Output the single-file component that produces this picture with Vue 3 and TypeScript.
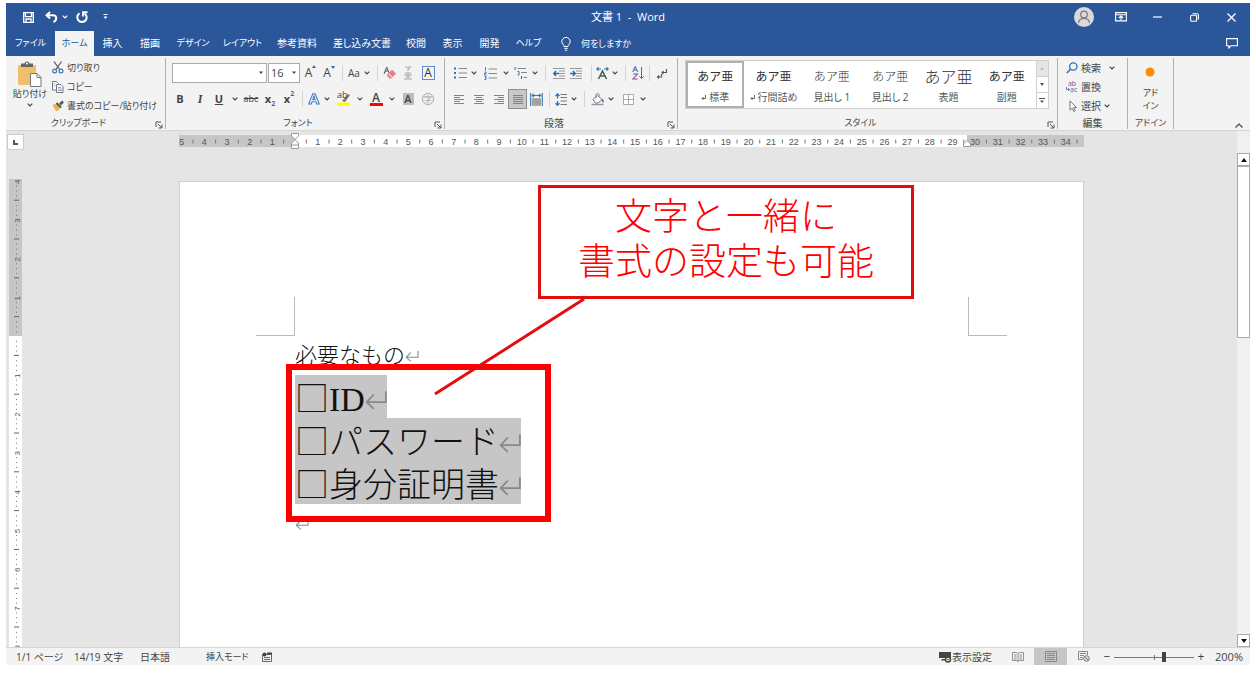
<script setup lang="ts">
import { ref } from 'vue'

interface Tab { label: string; kana: boolean }
const tabs: Tab[] = [
  { label: 'ファイル', kana: true },
  { label: 'ホーム', kana: true },
  { label: '挿入', kana: false },
  { label: '描画', kana: false },
  { label: 'デザイン', kana: true },
  { label: 'レイアウト', kana: true },
  { label: '参考資料', kana: false },
  { label: '差し込み文書', kana: false },
  { label: '校閲', kana: false },
  { label: '表示', kana: false },
  { label: '開発', kana: false },
  { label: 'ヘルプ', kana: true },
]
const activeTab = ref('ホーム')

interface StyleItem { name: string; kind: string; mark: boolean }
const styleItems: StyleItem[] = [
  { name: '標準', kind: 'mincho', mark: true },
  { name: '行間詰め', kind: 'mincho', mark: true },
  { name: '見出し 1', kind: 'gothic', mark: false },
  { name: '見出し 2', kind: 'gothic', mark: false },
  { name: '表題', kind: 'title', mark: false },
  { name: '副題', kind: 'mincho', mark: false },
]
const activeStyle = ref('標準')

const fontName = ref('')
const fontSize = ref('16')
const zoom = ref(63)

/* Horizontal ruler: one unit per character, origin at the left margin. */
const hUnit = 22.67
const hOrigin = 116
const hNumbers = Array.from({ length: 40 }, (_, i) => i - 5).filter((n) => n !== 0)
const hTicks = Array.from({ length: 40 }, (_, i) => i - 4.5)

/* Vertical ruler: one unit per line group, with eighths as dots. */
const vUnit = 38.8
const vOrigin = 157
const vNumbers = [-4, -3, -2, -1, 1, 2, 3, 4, 5, 6, 7, 8]
const vTicks = Array.from({ length: 13 }, (_, i) => i - 3.5)
const vDots = Array.from({ length: 100 }, (_, i) => (i - 31) / 8).filter((n) => n % 0.5 !== 0)

const selectedLines: string[] = ['ID', 'パスワード', '身分証明書']
</script>

<template>
  <div class="window">
    <svg class="defs" aria-hidden="true">
      <symbol id="i-chev" viewBox="0 0 6 4"><path d="M.7.7 3 3 5.3.7" fill="none" stroke="currentColor" stroke-width="1.2" /></symbol>
      <symbol id="i-tri" viewBox="0 0 6 4"><path d="M1 .5h4L3 3z" fill="currentColor" /></symbol>
      <symbol id="i-launch" viewBox="0 0 8 8"><path d="M1 6V1h5M3 3l4 4M7 3.5V7H3.5" fill="none" stroke="#555" /></symbol>
      <symbol id="i-return" viewBox="0 0 20 18"><path d="M19 1v10H2M8 4l-6.500 7L8 17" fill="none" stroke="currentColor" stroke-width="1.600" /></symbol>
    </svg>

    <header class="titlebar">
      <div class="quick">
        <button aria-label="上書き保存"><svg width="11" height="11" viewBox="0 0 11 11"><path d="M.7.7h9.600v9.600H.7zM2.500.7v4h6v-4M3 10.300V7h5v3.300" fill="none" stroke="#fff" stroke-width="1.300" /></svg></button>
        <button aria-label="元に戻す"><svg width="13" height="12" viewBox="0 0 13 12"><path d="M5 1 1.500 4.200 5 7.500M2 4.200h6c4 0 4.500 5 .5 6.800" fill="none" stroke="#fff" stroke-width="2" /></svg></button>
        <button aria-label="元に戻す履歴"><svg width="6" height="4"><use href="#i-chev" /></svg></button>
        <button aria-label="繰り返し"><svg width="12" height="12" viewBox="0 0 12 12"><path d="M3.500 2.200C-.5 5.200 1.500 11 6 11s6.400-5.500 2.500-8.500M7 5.500V1.200h4.500" fill="none" stroke="#fff" stroke-width="1.900" /></svg></button>
        <button aria-label="クイック アクセスの設定"><svg width="5" height="6" viewBox="0 0 5 6"><path d="M.5.5h4" stroke="#fff" /><path d="M.5 2.500h4l-2 2.500z" fill="#fff" /></svg></button>
      </div>
      <h1 class="doc-title">文書 1&nbsp; -&nbsp; Word</h1>
      <div class="controls">
        <button aria-label="アカウント"><svg width="20" height="20" viewBox="0 0 20 20"><circle cx="10" cy="10" r="10" fill="#dcdad8" /><circle cx="10" cy="7.500" r="3.300" fill="none" stroke="#777" stroke-width="1.200" /><path d="M4.500 16c.4-6 10.600-6 11 0" fill="none" stroke="#777" stroke-width="1.200" /></svg></button>
        <button aria-label="リボンの表示オプション"><svg width="12" height="10" viewBox="0 0 12 10"><path d="M.6.6h10.800v8.300H.6zM.6 2.700h10.800M6 8V4.200M3.800 6 6 4l2.200 2" fill="none" stroke="#fff" stroke-width="1.100" /></svg></button>
        <button aria-label="最小化"><svg width="9" height="2"><path d="M0 1h9" stroke="#fff" stroke-width="1.200" /></svg></button>
        <button aria-label="元のサイズ"><svg width="9" height="9" viewBox="0 0 9 9"><rect x=".6" y="2.300" width="6" height="6" rx="1" fill="none" stroke="#fff" stroke-width="1.100" /><path d="M2.500.7H7q1.400 0 1.400 1.400V6.500" fill="none" stroke="#fff" stroke-width="1.100" /></svg></button>
        <button aria-label="閉じる"><svg width="9" height="9"><path d="m.5.5 8 8m0-8-8 8" stroke="#fff" stroke-width="1.200" /></svg></button>
      </div>
    </header>

    <nav class="tabbar">
      <div class="tabs" role="tablist">
        <button v-for="t in tabs" :key="t.label" role="tab" :aria-selected="t.label === activeTab" :class="{ active: t.label === activeTab, kana: t.kana }" @click="activeTab = t.label">{{ t.label }}</button>
      </div>
      <button class="tell kana">
        <svg width="10" height="14" viewBox="0 0 10 14"><path d="M3 9.500C3 7.500.8 7 .8 4.600a4.200 4.200 0 0 1 8.400 0C9.200 7 7 7.500 7 9.500zM3.200 11.300h3.600M3.800 13.200h2.400" fill="none" stroke="#fff" /></svg>
        何をしますか
      </button>
      <button class="comment" aria-label="コメント"><svg width="12" height="11" viewBox="0 0 12 11"><path d="M.6.6h10.800v7.200H5L2.800 10V7.800H.6z" fill="none" stroke="#fff" stroke-width="1.100" /></svg></button>
    </nav>

    <section class="ribbon">
      <div class="group clipboard">
        <div class="body kana">
          <button class="paste">
            <svg width="24" height="26" viewBox="0 0 24 26"><rect y="4" width="18" height="20" rx="1" fill="#eebf6c" /><path d="M3 2.500h3.500a2.600 2.600 0 0 1 5 0H15V6H3z" fill="#666" /><circle cx="9" cy="2.500" r="1" fill="#fff" /><path d="M12.500 12.500h6.500l4 4v9H12.500z" fill="#fff" stroke="#777" /><path d="M19 12.500v4h4" fill="none" stroke="#777" /></svg>
            <span>貼り付け</span>
            <svg width="6" height="4"><use href="#i-chev" /></svg>
          </button>
          <div class="stack">
            <button><svg width="12" height="13" viewBox="0 0 12 13"><path d="M2 .5 8 9M9.500.5 3.500 9" stroke="#555" stroke-width="1.200" /><circle cx="2.600" cy="10" r="1.900" fill="none" stroke="#3c78b5" stroke-width="1.200" /><circle cx="9" cy="10" r="1.900" fill="none" stroke="#3c78b5" stroke-width="1.200" /></svg><span>切り取り</span></button>
            <button><svg width="12" height="12" viewBox="0 0 12 12"><path d="M.5.5h4l2 2V9h-6z" fill="#fff" stroke="#777" /><path d="M4.500 3.500h4.500l2 2v6H4.500z" fill="#fff" stroke="#777" /><path d="M6 6.500h3M6 8h4M6 9.500h4M1.500 3h2M1.500 5h2" stroke="#6d9bd0" stroke-width=".8" /></svg><span>コピー</span></button>
            <button><svg width="12" height="12" viewBox="0 0 12 12"><path d="m.5 5 4-1.500 4 4L6 10.500l-2 .8z" fill="#f0b24a" /><path d="m4.500 3 4.500 4.500" stroke="#555" stroke-width="2" /><path d="m8 4.500 3-3" stroke="#555" stroke-width="2.500" /></svg><span>書式のコピー/貼り付け</span></button>
          </div>
        </div>
        <footer class="kana"><span>クリップボード</span><button aria-label="クリップボードの詳細"><svg width="8" height="8"><use href="#i-launch" /></svg></button></footer>
      </div>

      <div class="group font">
        <div class="body rows">
          <div class="row font-a">
            <label class="combo"><input v-model="fontName" aria-label="フォント名"><svg width="6" height="4"><use href="#i-tri" /></svg></label>
            <label class="combo size"><input v-model="fontSize" aria-label="フォント サイズ"><svg width="6" height="4"><use href="#i-tri" /></svg></label>
            <button class="grow" aria-label="拡大"><span>A</span><svg width="4" height="4" viewBox="0 0 4 4"><path d="M0 3h4L2 0z" fill="#2b6cb8" /></svg></button>
            <button class="grow" aria-label="縮小"><span>A</span><svg width="4" height="4" viewBox="0 0 4 4"><path d="M0 1h4L2 4z" fill="#2b6cb8" /></svg></button>
            <i class="sep" />
            <button>Aa</button>
            <button aria-label="文字種の変換"><svg width="6" height="4"><use href="#i-chev" /></svg></button>
            <i class="sep" />
            <button aria-label="書式のクリア"><svg width="14" height="14" viewBox="0 0 14 14"><path d="m1 8 2.700-7L6 7M2 5h3" fill="none" stroke="#555" /><path d="m3.500 9 5.500-5.500 4 4L8 12.500H6.500z" fill="#e8808c" /><path d="m5.500 7.500 3.500 3.800" stroke="#fff" /></svg></button>
            <button aria-label="ルビ"><svg width="8" height="14" viewBox="0 0 8 14"><path d="M1 1h6L4 4M4 2v3M1 7h6M0 9h8M1.500 11h5M0 13h8M4 7v6" fill="none" stroke="#aaa" /></svg></button>
            <button class="boxed-a">A</button>
          </div>
          <div class="row font-b">
            <button class="b">B</button>
            <button class="i">I</button>
            <button class="b u">U</button>
            <button aria-label="下線の種類"><svg width="6" height="4"><use href="#i-chev" /></svg></button>
            <button class="strike">abc</button>
            <button class="b">x<sub>2</sub></button>
            <button class="b">x<sup>2</sup></button>
            <i class="sep" />
            <button aria-label="文字の効果"><svg width="12" height="12" viewBox="0 0 12 12"><path d="M.8 11 4.800.8h2.400l4 10.200H8.800L8 8.800H4L3.200 11zM4.700 6.800h2.600L6 3z" fill="#fff" stroke="#3e80cc" stroke-width="1.100" /></svg></button>
            <button aria-label="文字の効果の種類"><svg width="6" height="4"><use href="#i-chev" /></svg></button>
            <button class="marker"><span>ab</span><svg width="14" height="14" viewBox="0 0 14 14"><path d="m5 9 6-7 2 1-5 7z" fill="#777" /><path d="M0 10.500h13V14H0z" fill="#ff0" /></svg></button>
            <button aria-label="蛍光ペンの色"><svg width="6" height="4"><use href="#i-chev" /></svg></button>
            <button class="color-a">A</button>
            <button aria-label="フォントの色"><svg width="6" height="4"><use href="#i-chev" /></svg></button>
            <button class="shade-a">A</button>
            <button class="ring">字</button>
          </div>
        </div>
        <footer class="kana"><span>フォント</span><button aria-label="フォントの詳細"><svg width="8" height="8"><use href="#i-launch" /></svg></button></footer>
      </div>

      <div class="group para">
        <div class="body rows">
          <div class="row para-a">
            <button aria-label="箇条書き"><svg width="13" height="12" viewBox="0 0 13 12"><path d="M4.500 1.500H13M4.500 6H13M4.500 10.500H13" stroke="#888" /><path d="M0 1.500h2M0 6h2M0 10.500h2" stroke="#2f71b8" stroke-width="2" /></svg></button>
            <button aria-label="箇条書きの種類"><svg width="6" height="4"><use href="#i-chev" /></svg></button>
            <button aria-label="段落番号"><svg width="13" height="13" viewBox="0 0 13 13"><path d="M4.500 2H13M4.500 6.500H13M4.500 11H13" stroke="#888" /><path d="M1.500 0v3.500M.5 5h1.500v1.500H.5V8H2.500M.5 9.500H2v3H.5M1 11h1" fill="none" stroke="#2f71b8" stroke-width=".9" /></svg></button>
            <button aria-label="段落番号の種類"><svg width="6" height="4"><use href="#i-chev" /></svg></button>
            <button aria-label="アウトライン"><svg width="13" height="12" viewBox="0 0 13 12"><path d="M3.500 1.500H12M7 5.500h6M9.500 10.500H13" stroke="#888" /><path d="M1 0v3M3.500 4.500h1.500V8H3.500M7.500 9v3" fill="none" stroke="#2f71b8" /></svg></button>
            <button aria-label="アウトラインの種類"><svg width="6" height="4"><use href="#i-chev" /></svg></button>
            <i class="sep" />
            <button aria-label="インデントを減らす"><svg width="12" height="11" viewBox="0 0 12 11"><path d="M0 .5h12M6 3h6M6 5.500h6M6 8h6M0 10.500h12" stroke="#999" /><path d="M6 5.500H1M3 3 .8 5.500 3 8" fill="none" stroke="#2468b2" stroke-width="1.500" /></svg></button>
            <button aria-label="インデントを増やす"><svg width="12" height="11" viewBox="0 0 12 11"><path d="M0 .5h12M6 3h6M6 5.500h6M6 8h6M0 10.500h12" stroke="#999" /><path d="M0 5.500h5M3 3l2.200 2.500L3 8" fill="none" stroke="#2468b2" stroke-width="1.500" /></svg></button>
            <i class="sep" />
            <button aria-label="拡張書式"><svg width="13" height="13" viewBox="0 0 13 13"><path d="M2.500 12 6.500 4l4 8M4 9h5" fill="none" stroke="#4e5a4e" stroke-width="1.500" /><path d="M1 2h4M8 2h4M2.500.3.8 2l1.700 1.700M10.500.3 12.200 2l-1.700 1.700" fill="none" stroke="#2f71b8" stroke-width="1.200" /></svg></button>
            <button aria-label="拡張書式の種類"><svg width="6" height="4"><use href="#i-chev" /></svg></button>
            <i class="sep" />
            <button aria-label="並べ替え"><svg width="12" height="14" viewBox="0 0 12 14"><path d="M.7 6 3.200.5 5.700 6M1.500 4h3.400" fill="none" stroke="#3b7cc4" stroke-width="1.100" /><path d="M1 8h4.500L1 13h4.700" fill="none" stroke="#8a4ba0" stroke-width="1.100" /><path d="M9.500 1v11.500M7.300 10.300l2.200 2.200 2.200-2.200" fill="none" stroke="#666" /></svg></button>
            <i class="sep" />
            <button aria-label="編集記号の表示"><svg width="12" height="11" viewBox="0 0 12 11"><path d="M10.500 1v3.500H6M7.500 3 6 4.500 7.500 6M5.500 6v3H1.500M3 7.500 1.500 9 3 10.500" fill="none" stroke="#555" stroke-width="1.100" /></svg></button>
          </div>
          <div class="row para-b">
            <button aria-label="左揃え"><svg width="10" height="10" viewBox="0 0 10 10"><path d="M0 1.500h10M0 3.500h6M0 5.500h10M0 7.500h6M0 9.500h10" stroke="#777" stroke-width=".9" /></svg></button>
            <button aria-label="中央揃え"><svg width="10" height="10" viewBox="0 0 10 10"><path d="M0 1.500h10M2 3.500h6M0 5.500h10M2 7.500h6M0 9.500h10" stroke="#777" stroke-width=".9" /></svg></button>
            <button aria-label="右揃え"><svg width="10" height="10" viewBox="0 0 10 10"><path d="M0 1.500h10M4 3.500h6M0 5.500h10M4 7.500h6M0 9.500h10" stroke="#777" stroke-width=".9" /></svg></button>
            <button class="pressed" aria-label="両端揃え"><svg width="10" height="10" viewBox="0 0 10 10"><path d="M0 1.500h10M0 3.500h10M0 5.500h10M0 7.500h10M0 9.500h10" stroke="#777" stroke-width=".9" /></svg></button>
            <button aria-label="均等割り付け"><svg width="13" height="13" viewBox="0 0 13 13"><path d="M.7 0v13M12.300 0v13M2.500 2.500h8M4 .8 2.300 2.500 4 4.200M9 .8l1.700 1.700L9 4.200" fill="none" stroke="#2f71b8" stroke-width="1.100" /><path d="M2 5.500h9v7H2z" fill="#bbb" /><path d="M2 6h9M2 8h9M2 10h9M2 12h9" stroke="#888" /></svg></button>
            <i class="sep" />
            <button aria-label="行間"><svg width="12" height="13" viewBox="0 0 12 13"><path d="M5.500 1.500H12M5.500 4.500H12M5.500 8H12M5.500 11.500H12" stroke="#777" /><path d="M2.500 1v4.500M2.500 8v4M.5 3l2-2 2 2M.5 10.300l2 2 2-2" fill="none" stroke="#2f71b8" stroke-width="1.300" /></svg></button>
            <button aria-label="行間の種類"><svg width="6" height="4"><use href="#i-chev" /></svg></button>
            <i class="sep" />
            <button aria-label="塗りつぶし"><svg width="14" height="13" viewBox="0 0 14 13"><path d="m2 6.500 4.500-4 4.500 4L7 10H4.500zM5 5V2c0-2 3-2 3 0v1.500" fill="#fff" stroke="#777" /><path d="M11 5.500c2 1 2.200 3 1.300 4.500-1.500-.5-1.500-2.500-1.300-4.500z" fill="#3b7cc4" /><path d="M.5 11.500h12" stroke="#999" stroke-width="1.500" /></svg></button>
            <button aria-label="塗りつぶしの色"><svg width="6" height="4"><use href="#i-chev" /></svg></button>
            <button aria-label="罫線"><svg width="11" height="11" viewBox="0 0 11 11"><path d="M.5.5h10v10H.5zM5.500.5v10M.5 5.500h10" fill="#fff" stroke="#aaa" /></svg></button>
            <button aria-label="罫線の種類"><svg width="6" height="4"><use href="#i-chev" /></svg></button>
          </div>
        </div>
        <footer><span>段落</span><button aria-label="段落の詳細"><svg width="8" height="8"><use href="#i-launch" /></svg></button></footer>
      </div>

      <div class="group styles">
        <div class="body">
          <div class="gallery">
            <button v-for="s in styleItems" :key="s.name" class="style" :class="{ chosen: s.name === activeStyle }" @click="activeStyle = s.name">
              <span class="sample" :class="s.kind">あア亜</span>
              <span class="name"><svg v-if="s.mark" width="5" height="5" viewBox="0 0 5 5"><path d="M4.500 0v3.500H1M2.500 2 1 3.500 2.500 5" fill="none" stroke="#666" /></svg>{{ s.name }}</span>
            </button>
            <div class="gallery-nav">
              <button class="dim" aria-label="前の行"><svg width="4" height="3" viewBox="0 0 4 3"><path d="M0 3h4L2 0z" fill="#bbb" /></svg></button>
              <button aria-label="次の行"><svg width="4" height="3" viewBox="0 0 4 3"><path d="M0 0h4L2 3z" fill="#555" /></svg></button>
              <button aria-label="その他"><svg width="6" height="6" viewBox="0 0 6 6"><path d="M0 .5h6" stroke="#555" /><path d="M1 2.500h4L3 5z" fill="#555" /></svg></button>
            </div>
          </div>
        </div>
        <footer class="kana"><span>スタイル</span><button aria-label="スタイルの詳細"><svg width="8" height="8"><use href="#i-launch" /></svg></button></footer>
      </div>

      <div class="group edit">
        <div class="body stack">
          <button><svg width="12" height="12" viewBox="0 0 12 12"><circle cx="7.300" cy="4.500" r="3.700" fill="none" stroke="#2f71b8" stroke-width="1.300" /><path d="M4.600 7.200.8 11" stroke="#2f71b8" stroke-width="1.600" /></svg><span>検索</span><svg class="gap" width="6" height="4"><use href="#i-chev" /></svg></button>
          <button><span class="swap"><b>ab</b><em><svg width="4" height="5" viewBox="0 0 4 5"><path d="M.5 0v2.500h3M2 1l1.500 1.500L2 4" fill="none" stroke="#2f71b8" stroke-width=".8" /></svg>ac</em></span><span>置換</span></button>
          <button><svg width="12" height="12" viewBox="0 0 12 12"><path d="M4 .8v9.400l2.200-2 1.600 3.300 1.300-.7-1.500-3.200h2.900z" fill="#fff" stroke="#777" /></svg><span>選択</span><svg width="6" height="4"><use href="#i-chev" /></svg></button>
        </div>
        <footer class="plain"><span>編集</span></footer>
      </div>

      <div class="group addin">
        <div class="body kana">
          <button><svg width="10" height="10"><circle cx="5" cy="5" r="4.500" fill="#ff8c00" /></svg><span>アド<br>イン</span></button>
        </div>
        <footer class="plain kana"><span>アドイン</span></footer>
      </div>
      <button class="collapse" aria-label="リボンを折りたたむ"><svg width="8" height="5" viewBox="0 0 8 5"><path d="M.5 4.500 4 1l3.500 3.500" fill="none" stroke="#444" stroke-width="1.200" /></svg></button>
    </section>

    <main class="editor">
      <aside class="left-rail">
        <button class="corner" aria-label="タブ セレクター"><svg width="5" height="5"><path d="M1 0v4h4" fill="none" stroke="#555" stroke-width="2" /></svg></button>
        <svg class="vruler" width="13" height="640" viewBox="0 0 13 640" aria-hidden="true">
          <rect width="13" height="640" fill="#fff" />
          <rect width="13" :height="vOrigin" fill="#c6c6c6" />
          <path v-for="t in vTicks" :key="'t' + t" :d="`M5 ${vOrigin + t * vUnit}h5`" stroke="#666" />
          <rect v-for="d in vDots" :key="'d' + d" x="7" :y="vOrigin + d * vUnit" width="1" height="1" fill="#777" />
          <text v-for="n in vNumbers" :key="'n' + n" :transform="`translate(10.500 ${vOrigin + n * vUnit + 1}) rotate(-90)`" text-anchor="middle">{{ Math.abs(n) }}</text>
        </svg>
      </aside>

      <div class="canvas">
        <svg class="hruler" viewBox="0 0 905 18" aria-hidden="true">
          <rect y="4" width="905" height="12" fill="#fff" />
          <rect y="4" width="116" height="12" fill="#c6c6c6" />
          <rect x="788" y="4" width="117" height="12" fill="#c6c6c6" />
          <path v-for="t in hTicks" :key="'t' + t" :d="`M${hOrigin + t * hUnit} 8.500v4`" stroke="#777" />
          <text v-for="n in hNumbers" :key="'n' + n" :x="hOrigin + n * hUnit" y="14" text-anchor="middle">{{ Math.abs(n) }}</text>
          <path d="M112.500 2.500h7v2.500l-3.500 3.500-3.500-3.500zM116 8.500l3.500 3.500v5.500h-7V12zM112.500 14h7M788 9.500l3.500 3.500v2.500h-7V13z" fill="#fff" stroke="#999" />
        </svg>

        <article class="page">
          <div class="crop"><i class="crop-l" /><i class="crop-r" /></div>
          <div class="text">
            <p class="intro">必要なもの<svg width="14" height="12"><use href="#i-return" /></svg></p>
            <p v-for="line in selectedLines" :key="line" class="picked"><span><span class="box">□</span>{{ line }}<svg width="22" height="20"><use href="#i-return" /></svg></span></p>
            <p class="intro"><svg width="14" height="12"><use href="#i-return" /></svg></p>
          </div>
          <div class="frame" />
          <svg class="pointer" width="154" height="100" viewBox="0 0 154 100"><path d="M151 3 2 98" stroke="#e30d0d" stroke-width="3" /></svg>
          <div class="callout">文字と一緒に<br>書式の設定も可能</div>
        </article>
      </div>

      <div class="scrollbar">
        <button aria-label="上へ"><svg width="6" height="4" viewBox="0 0 6 4"><path d="M0 4h6L3 0z" fill="#111" /></svg></button>
        <div class="thumb" />
        <button class="down" aria-label="下へ"><svg width="6" height="4" viewBox="0 0 6 4"><path d="M0 0h6L3 4z" fill="#111" /></svg></button>
      </div>
    </main>

    <footer class="status">
      <span class="s-page">1/1 ページ</span>
      <span class="s-count">14/19 文字</span>
      <span class="s-lang">日本語</span>
      <span class="s-mode kana">挿入モード</span>
      <svg width="10" height="10" viewBox="0 0 10 10"><path d="M.5 2.500h9v7h-9zM2 5.500h6M2 7.500h6" fill="none" stroke="#666" /><circle cx="2.500" cy="2.500" r="2" fill="#444" /><path d="M5 1.500h5" stroke="#444" stroke-width="2" /></svg>
      <button class="display"><svg width="13" height="12" viewBox="0 0 13 12"><path d="M0 1h12v6H0zM3 8h3v1.500H2z" fill="#444" /><circle cx="9" cy="8.500" r="2.500" fill="#f3f3f3" stroke="#444" stroke-width="1.500" /><circle cx="9" cy="8.500" r=".8" fill="#444" /></svg>表示設定</button>
      <button class="view" aria-label="閲覧モード"><svg width="12" height="10" viewBox="0 0 12 10"><path d="M.5.5h4L6 1.500 7.500.5h4v8h-4L6 9.500l-1.500-1h-4zM6 1.500v8M2 3h2.500M2 5h2.500M2 7h2.500M7.500 3H10M7.500 5H10M7.500 7H10" fill="none" stroke="#888" stroke-width=".9" /></svg></button>
      <button class="view on" aria-label="印刷レイアウト"><svg width="12" height="11" viewBox="0 0 12 11"><path d="M.5.5h11v10H.5zM2 2.500h8M2 4.500h8M2 6.500h8M2 8.500h8" fill="none" stroke="#888" /></svg></button>
      <button class="view" aria-label="Web レイアウト"><svg width="12" height="11" viewBox="0 0 12 11"><path d="M5 8.500H.5v-8h9V4M2 2.500h6M2 4.500h4M2 6.500h3" fill="none" stroke="#888" /><circle cx="8.500" cy="7.500" r="2.800" fill="#ddd" stroke="#777" /><path d="m6.500 5.500 4 4" stroke="#777" /></svg></button>
      <div class="zoom">
        <button aria-label="縮小">−</button>
        <input v-model.number="zoom" type="range" min="0" max="100" aria-label="ズーム">
        <button aria-label="拡大">+</button>
        <span>200%</span>
      </div>
    </footer>
  </div>
</template>

<style>
body { margin: 0; background: #fff; }
</style>

<style scoped>
* { box-sizing: border-box; }
.window {
  display: flex;
  flex-direction: column;
  height: 100vh;
  padding: 3px 6px 8px;
  color: #444;
  font: 10px/14px "Open Sans", "Noto Sans CJK JP", sans-serif;
  font-feature-settings: "palt";
}
.defs { position: absolute; width: 0; height: 0; }
button {
  display: flex;
  align-items: center;
  justify-content: center;
  margin: 0;
  padding: 0;
  border: 0;
  background: none;
  color: inherit;
  font: inherit;
  font-feature-settings: inherit;
  white-space: nowrap;
}
svg { flex: none; display: block; }
.kana { font-size: 9px; }

.titlebar { display: grid; grid-template-columns: 1fr auto 1fr; flex: none; align-items: center; height: 28px; background: #2b579a; color: #fff; }
.quick, .controls { display: grid; align-items: center; height: 28px; }
.quick { grid-template-columns: 24px 22px 6px 28px 18px; justify-content: start; padding-left: 10px; }
.controls { grid-template-columns: repeat(5, 37px); justify-content: end; }
.doc-title { margin: 0; font-size: 11px; font-weight: 400; }

.tabbar { display: flex; flex: none; height: 25px; background: #2b579a; color: #fff; }
.tabs { display: grid; grid-template-columns: 49px 39px 37px 38px 48px 51px 58px 72px 36px 37px 37px 41px; }
.tabs button { padding-bottom: 1px; }
.tabs .active { background: #f3f3f3; color: #2b579a; }
.tell { gap: 10px; padding-left: 12px; }
.comment { width: 37px; margin-left: auto; }

.ribbon { display: flex; flex: none; height: 75px; background: #f3f3f3; border-bottom: 1px solid #d5d5d5; }
.group { display: flex; flex-direction: column; flex: none; margin: 2px 0 1px; border-right: 1px solid #b0b0b0; }
.group .body { flex: 1; }
.group > footer { display: flex; height: 13px; align-items: center; justify-content: center; position: relative; padding-right: 14px; }
.group > footer.plain { padding-right: 0; }
.group > footer button { position: absolute; right: 2px; bottom: 0; }
.clipboard { width: 160px; }
.font { width: 279px; }
.para { width: 233px; }
.styles { width: 380px; }
.edit { width: 70px; }
.addin { width: 46px; }
.collapse { margin: auto 7px 2px auto; }
.clipboard .body { display: flex; }
.paste { flex-direction: column; width: 46px; padding: 3px 0 0 2px; justify-content: flex-start; }
.paste > svg:last-child { margin-top: 2px; }
.stack { display: flex; flex-direction: column; }
.stack button { height: 19px; gap: 3px; justify-content: flex-start; }
.stack .gap { margin-left: 5px; }
.rows { display: flex; flex-direction: column; gap: 6px; padding-top: 5px; }
.row { display: grid; height: 20px; }
.row > * { height: 20px; }
.font-a { grid-template-columns: 96px 33px 19px 18px 8px 16px 9px 12px 14px 22px 18px; padding-left: 6px; }
.font-b { grid-template-columns: 20px 20px 18px 14px 18px 20px 18px 8px 15px 12px 22px 10px 22px 9px 24px 16px; padding-left: 4px; }
.para-a { grid-template-columns: 18px 10px 22px 9px 21px 8px 13px 13px 22px 8px 15px 9px 12px 14px 8px 18px; padding-left: 6px; }
.para-b { grid-template-columns: 18px 21px 19px 19px 19px 6px 17px 9px 12px 15px 12px 22px 8px; padding-left: 5px; }
.sep { width: 1px; height: 16px; margin: 2px auto; background: #d4d4d4; }
.combo { display: flex; align-items: center; margin-right: 1px; background: #fff; border: 1px solid #ababab; padding-right: 2px; }
.combo input { flex: 1; min-width: 0; width: 0; padding: 0 2px; border: 0; outline: 0; background: none; color: #444; font: 11px/16px "Open Sans", sans-serif; }
.grow { align-items: center; font-size: 12px; }
.grow svg { align-self: flex-start; margin-top: 2px; }
.boxed-a { width: 13px; height: 14px; margin: 3px auto; border: 1px solid #5b8fce; color: #333; font-size: 12px; line-height: 12px; }
.b { font-weight: 700; font-size: 11px; }
.b sub, .b sup { align-self: flex-end; color: #2f71b8; font-size: 7px; line-height: 10px; }
.b sup { align-self: flex-start; }
.i { font: italic 700 12px/14px "Liberation Serif", serif; }
.u { text-decoration: underline; }
.strike { text-decoration: line-through; font-size: 9px; }
.marker { position: relative; }
.marker span { position: absolute; left: 4px; top: 0; font-size: 9px; line-height: 12px; }
.color-a { width: 13px; height: 14px; margin: 3px auto; border-bottom: 3px solid #f00; font-size: 12px; font-weight: 600; line-height: 10px; }
.shade-a { width: 11px; height: 12px; margin: 4px auto; background: #bcbcbc; font-size: 11px; font-weight: 600; line-height: 12px; }
.ring { width: 12px; height: 12px; margin: 4px auto; border: 1px solid #aaa; border-radius: 50%; color: #999; font-size: 8px; line-height: 10px; }
.pressed { border: 1px solid #8f8f8f; background: #c8c8c8; }

.styles .body { padding: 2px 8px 0 7px; }
.gallery { display: flex; height: 49px; background: #fff; border: 1px solid #d0d0d0; }
.style { flex: 1; flex-direction: column; color: #555; justify-content: space-between; padding: 4px 0 4px; }
.style.chosen { outline: 2px solid #b0b0b0; outline-offset: -2px; }
.sample { display: flex; align-items: center; height: 24px; color: #333; font-size: 12px; line-height: 24px; font-feature-settings: normal; }
.sample.gothic { font-weight: 300; }
.sample.title { font-size: 16px; font-weight: 300; }
.name { display: flex; align-items: center; gap: 3px; }
.gallery-nav { display: flex; flex-direction: column; width: 12px; border-left: 1px solid #d0d0d0; }
.gallery-nav button { flex: 1; border-top: 1px solid #d0d0d0; }
.gallery-nav .dim { border: 0; background: #e6e6e6; }

.edit .stack { padding-left: 8px; }
.swap { display: flex; flex-direction: column; width: 12px; font-size: 7px; line-height: 6px; }
.swap b { color: #7b4a96; font-weight: 400; }
.swap em { display: flex; align-items: center; color: #2f71b8; font-style: normal; }
.addin .body { display: flex; justify-content: center; }
.addin button { flex-direction: column; justify-content: flex-start; gap: 9px; line-height: 13px; padding-top: 9px; }

.editor { display: grid; grid-template-columns: 19px 1fr 13px; flex: 1; min-height: 0; background: #e5e5e5; }
.left-rail { display: flex; flex-direction: column; min-height: 0; overflow: hidden; }
.corner { flex: none; width: 17px; height: 16px; margin: 3px 1px 29px; background: #fff; border: 1px solid #ccc; }
.vruler { margin-left: 3px; }
.vruler text { fill: #555; font: 8px "Liberation Sans", sans-serif; }
.canvas { display: grid; grid-template-columns: 154fr 905fr 153fr; grid-template-rows: auto 1fr; row-gap: 32px; min-height: 0; overflow: hidden; }
.hruler, .page { grid-column: 2; }
.hruler { width: 100%; }
.hruler text { fill: #555; font: 9px "Liberation Sans", sans-serif; }
.page { position: relative; min-height: 0; background: #fff; border: 1px solid #d0d0d0; border-bottom: 0; }
.crop { display: flex; justify-content: space-between; margin: 115px 76px 0; height: 39px; }
.crop i { width: 39px; border-bottom: 1px solid #bbb; }
.crop-l { border-right: 1px solid #bbb; }
.crop-r { border-left: 1px solid #bbb; }
.text { margin: 0 115px; color: #111; font-family: "Liberation Serif", "Noto Sans CJK JP", serif; font-weight: 300; font-feature-settings: normal; }
.text p { margin: 0; }
.text svg { display: inline-block; color: #888; vertical-align: 1px; }
.intro { height: 39px; font-size: 22px; line-height: 39px; }
.picked { height: 43px; font-size: 34px; line-height: 43px; }
.picked > span { display: inline-block; height: 43px; background: #c6c6c6; }
.box { font-family: "Noto Sans CJK JP", sans-serif; }
.frame { position: absolute; left: 106px; top: 182px; width: 265px; height: 158px; border: 6px solid #f00; }
.pointer { position: absolute; left: 253px; top: 114px; }
.callout { position: absolute; left: 358px; top: 3px; padding: 4px 37px 14px; border: 3px solid #e30d0d; background: #fff; color: #f00; font: 300 37px/45px "Noto Sans CJK JP", sans-serif; font-feature-settings: normal; text-align: center; white-space: nowrap; }

.scrollbar { display: flex; flex-direction: column; padding-top: 22px; background: #f0f0f0; }
.scrollbar button { height: 13px; background: #fff; border: 1px solid #aaa; }
.scrollbar .thumb { height: 172px; background: #fff; border: 1px solid #aaa; }
.scrollbar .down { margin-top: auto; }

.status { display: flex; flex: none; align-items: center; height: 18px; padding: 0 7px 0 10px; background: #f3f3f3; border-top: 1px solid #d5d5d5; white-space: nowrap; }
.s-page { width: 58px; }
.s-count { width: 66px; }
.s-lang { width: 66px; }
.s-mode { width: 56px; }
.display { margin-left: auto; margin-right: 9px; }
.view { width: 33px; height: 17px; }
.view.on { background: #c6c6c6; }
.zoom { display: flex; align-items: center; width: 143px; font-size: 11px; }
.zoom button { width: 14px; font-size: 12px; }
.zoom span { margin-left: auto; }
.zoom input { appearance: none; width: 80px; height: 10px; margin: 0; background: linear-gradient(#777, #777) 0 5px / 100% 1px no-repeat, linear-gradient(#777, #777) 40px 3px / 1px 5px no-repeat; }
.zoom input::-webkit-slider-thumb { appearance: none; width: 4px; height: 10px; background: #444; }
</style>
